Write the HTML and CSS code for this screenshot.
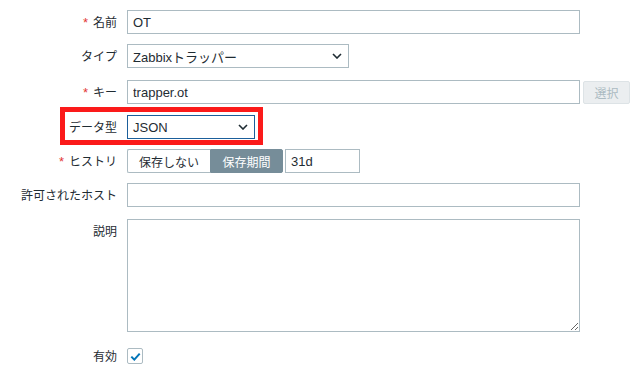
FILE: index.html
```html
<!DOCTYPE html>
<html lang="ja">
<head>
<meta charset="utf-8">
<link rel="stylesheet" href="styles.css">
</head>
<body>
<form class="form">
  <div class="row r-name">
    <label class="lbl"><span class="req">*</span>名前</label>
    <input class="inp wide" type="text" value="OT">
  </div>
  <div class="row r-type">
    <label class="lbl">タイプ</label>
    <div class="sel sel-type"><span>Zabbixトラッパー</span><svg class="chev" width="10" height="6" viewBox="0 0 10 6"><path d="M1 1l4 4 4-4" fill="none" stroke="#1f2c33" stroke-width="1.6"/></svg></div>
  </div>
  <div class="row r-key">
    <label class="lbl"><span class="req">*</span>キー</label>
    <input class="inp wide" type="text" value="trapper.ot">
    <button type="button" class="btn-dis">選択</button>
  </div>
  <div class="row r-dtype">
    <div class="highlight"></div>
    <label class="lbl">データ型</label>
    <div class="sel sel-dtype"><span>JSON</span><svg class="chev" width="10" height="6" viewBox="0 0 10 6"><path d="M1 1l4 4 4-4" fill="none" stroke="#1f2c33" stroke-width="1.6"/></svg></div>
  </div>
  <div class="row r-hist">
    <label class="lbl"><span class="req">*</span>ヒストリ</label>
    <div class="seg">
      <span class="seg-item">保存しない</span>
      <span class="seg-item on">保存期間</span>
    </div>
    <input class="inp short" type="text" value="31d">
  </div>
  <div class="row r-hosts">
    <label class="lbl">許可されたホスト</label>
    <input class="inp wide" type="text" value="">
  </div>
  <div class="row r-desc">
    <label class="lbl top">説明</label>
    <textarea class="ta"></textarea>
  </div>
  <div class="row r-en">
    <label class="lbl">有効</label>
    <span class="cb"><svg width="11" height="9" viewBox="0 0 11 9"><path d="M1.3 4.6l3 3 5.4-6" fill="none" stroke="#0275b8" stroke-width="2"/></svg></span>
  </div>
</form>
</body>
</html>
```

FILE: styles.css
```css
html, body {
  margin: 0;
  padding: 0;
  background: #ffffff;
}
body {
  font-family: "Liberation Sans", "Noto Sans CJK JP", sans-serif;
  color: #1f2c33;
  font-size: 12px;
  width: 642px;
  height: 373px;
  overflow: hidden;
}
.form {
  display: flex;
  flex-direction: column;
  padding-top: 10px;
}
.row {
  display: flex;
  align-items: center;
  position: relative;
}
.r-type { margin-top: 10px; }
.r-key { margin-top: 12px; }
.r-dtype { margin-top: 11px; }
.r-hist { margin-top: 10px; }
.r-hosts { margin-top: 10px; }
.r-desc { margin-top: 12px; align-items: flex-start; }
.r-en { margin-top: 16px; }

.lbl {
  width: 117px;
  padding-right: 10px;
  box-sizing: content-box;
  text-align: right;
  font-size: 12px;
  line-height: 14px;
  flex: none;
  font-family: "Noto Sans CJK JP", "Liberation Sans", sans-serif;
  position: relative;
  z-index: 1;
}
.lbl.top { padding-top: 5px; }
.req {
  color: #e33734;
  margin-right: 5px;
  font-family: "Liberation Sans", sans-serif;
  font-size: 13px;
}
.inp {
  box-sizing: border-box;
  height: 24px;
  border: 1px solid #acbbc2;
  background: #fff;
  font-family: "Liberation Sans", "Noto Sans CJK JP", sans-serif;
  font-size: 13px;
  color: #1f2c33;
  padding: 0 5px;
  margin: 0;
  outline: none;
}
.wide { width: 453px; }
.short { width: 75px; margin-left: 2px; }

.sel {
  box-sizing: border-box;
  height: 24px;
  border: 1px solid #acbbc2;
  display: flex;
  align-items: center;
  justify-content: space-between;
  padding: 0 6px 0 5px;
  font-size: 13px;
  background: #fff;
  position: relative;
  z-index: 1;
}
.sel span { font-family: "Liberation Sans", "Noto Sans CJK JP", sans-serif; }
.sel-type { width: 222px; }
.sel-dtype { width: 128px; border-color: #1b5f9b; }
.chev { display: block; }

.btn-dis {
  box-sizing: border-box;
  margin: 1px 0 0 3px;
  width: 47px;
  height: 23px;
  background: #ebeef0;
  border: 1px solid #dde3e6;
  border-radius: 2px;
  color: #acbbc2;
  font-family: "Noto Sans CJK JP", sans-serif;
  font-size: 12px;
  padding: 0;
}

.highlight {
  position: absolute;
  left: 60px;
  top: -8px;
  width: 203px;
  height: 38px;
  box-sizing: border-box;
  border: 5px solid #fb1a1a;
}

.seg {
  display: flex;
  height: 24px;
  box-sizing: border-box;
}
.seg-item {
  box-sizing: border-box;
  height: 24px;
  display: flex;
  align-items: center;
  justify-content: center;
  border: 1px solid #acbbc2;
  font-family: "Noto Sans CJK JP", sans-serif;
  font-size: 12px;
}
.seg-item:first-child {
  width: 83px;
  border-right: none;
  border-radius: 2px 0 0 2px;
  background: #fff;
}
.seg-item.on {
  width: 73px;
  background: #768d99;
  border-color: #768d99;
  color: #fff;
  border-radius: 0 2px 2px 0;
}

.ta {
  box-sizing: border-box;
  width: 453px;
  height: 113px;
  border: 1px solid #acbbc2;
  margin: 0;
  padding: 4px 5px;
  outline: none;
  resize: both;
}

.cb {
  box-sizing: border-box;
  width: 16px;
  height: 16px;
  border: 1px solid #acbbc2;
  border-radius: 2px;
  display: flex;
  align-items: center;
  justify-content: center;
}
.cb svg { display: block; }
```
